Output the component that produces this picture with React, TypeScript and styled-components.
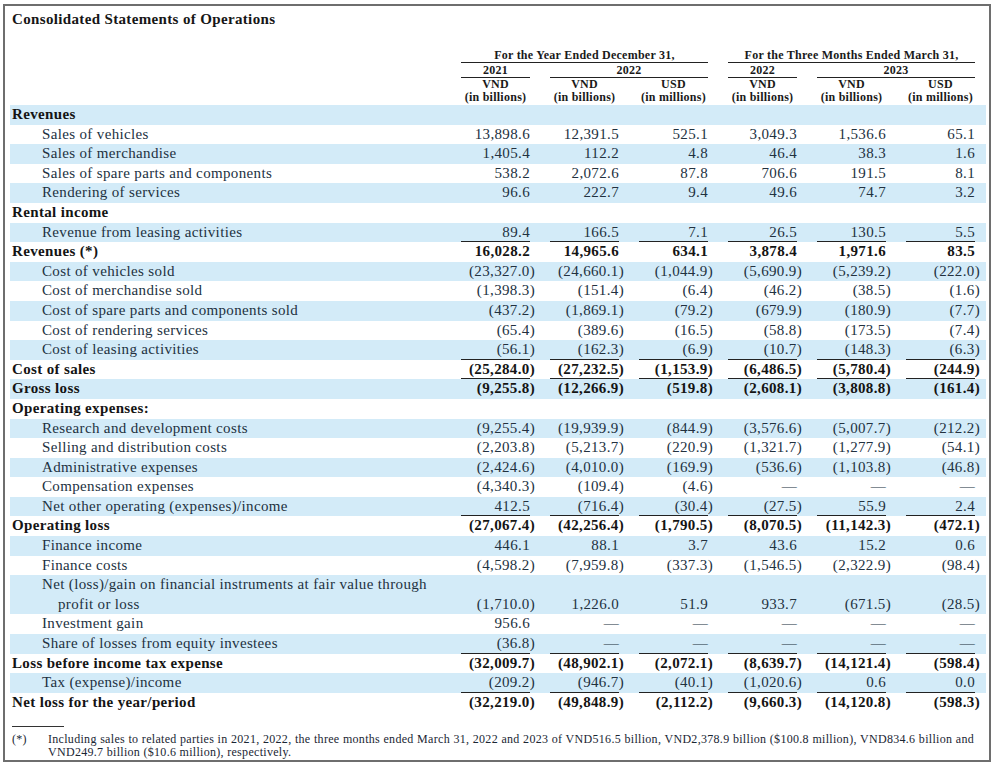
import React from "react";
import styled, { createGlobalStyle } from "styled-components";

const GlobalStyle = createGlobalStyle`
  html, body {
    margin: 0;
    padding: 0;
    background: #ffffff;
  }
`;

const COLS = "1fr repeat(6, 69px)";

const Frame = styled.div`
  box-sizing: border-box;
  margin: 4px 0 0 3px;
  width: 988px;
  height: 758px;
  border: 2px solid #6e6e6e;
  padding: 4px 3px 0 5px;
  font-family: "Liberation Serif", "Times New Roman", serif;
  color: #22313f;
`;

const Title = styled.h1`
  margin: 0;
  padding-left: 2px;
  font-size: 15px;
  line-height: 18px;
  font-weight: bold;
  letter-spacing: 0.35px;
  color: #161616;
`;

const Header = styled.div`
  margin-top: 20px;
  margin-bottom: 1px;
`;

const HeadRow = styled.div<{ $pad?: boolean }>`
  display: grid;
  grid-template-columns: ${COLS};
  column-gap: 20px;
  padding-right: 11px;
  padding-bottom: ${(p) => (p.$pad ? "1px" : "0")};
  padding-top: ${(p) => (p.$pad ? "1px" : "0")};
`;

const HeadCell = styled.div<{ $col: string; $rule?: boolean }>`
  grid-column: ${(p) => p.$col};
  text-align: center;
  font-size: 12px;
  line-height: 13px;
  font-weight: bold;
  letter-spacing: 0.25px;
  color: #1a1a1a;
  white-space: nowrap;
  border-bottom: ${(p) => (p.$rule ? "1px solid #222" : "none")};
`;

const Row = styled.div<{ $band: boolean; $tall?: boolean }>`
  display: grid;
  grid-template-columns: ${COLS};
  column-gap: 20px;
  padding-right: 11px;
  height: ${(p) => (p.$tall ? "39.2px" : "19.6px")};
  align-items: end;
  background: ${(p) => (p.$band ? "#d3ebf8" : "transparent")};
  font-size: 15px;
  line-height: 19.6px;
  letter-spacing: 0.35px;
`;

const Label = styled.div<{ $kind: "head" | "item" | "total" }>`
  padding-left: ${(p) => (p.$kind === "item" ? "32px" : "2px")};
  font-weight: ${(p) => (p.$kind === "item" ? "normal" : "bold")};
  color: ${(p) => (p.$kind === "item" ? "#22313f" : "#141414")};
  white-space: nowrap;
`;

const Wrapped = styled.span`
  display: block;
  padding-left: 16px;
`;

const Num = styled.div<{ $bold: boolean; $rule?: boolean }>`
  text-align: right;
  white-space: nowrap;
  font-weight: ${(p) => (p.$bold ? "bold" : "normal")};
  color: ${(p) => (p.$bold ? "#141414" : "#22313f")};
  box-shadow: ${(p) => (p.$rule ? "inset 0 -1px 0 #222" : "none")};
`;

const Hang = styled.span`
  margin-right: -5px;
`;

const Footnote = styled.div`
  margin-top: 14px;
  font-size: 12px;
  line-height: 13px;
  letter-spacing: 0.3px;
  color: #1a2633;
`;

const FootRule = styled.div`
  width: 52px;
  margin-left: 2px;
  border-top: 1px solid #333;
  margin-bottom: 6px;
`;

const FootBody = styled.div`
  display: grid;
  grid-template-columns: 36px 1fr;
  padding-left: 2px;
  padding-right: 12px;
`;

const FootLine = styled.span<{ $full?: boolean }>`
  display: block;
  text-align: ${(p) => (p.$full ? "justify" : "left")};
  text-align-last: ${(p) => (p.$full ? "justify" : "left")};
  white-space: nowrap;
`;

type Kind = "head" | "item" | "total";

type Line = {
  label: string;
  more?: string;
  kind: Kind;
  values?: string[];
  rule?: boolean;
};

const lines: Line[] = [
  { label: "Revenues", kind: "head" },
  { label: "Sales of vehicles", kind: "item", values: ["13,898.6", "12,391.5", "525.1", "3,049.3", "1,536.6", "65.1"] },
  { label: "Sales of merchandise", kind: "item", values: ["1,405.4", "112.2", "4.8", "46.4", "38.3", "1.6"] },
  { label: "Sales of spare parts and components", kind: "item", values: ["538.2", "2,072.6", "87.8", "706.6", "191.5", "8.1"] },
  { label: "Rendering of services", kind: "item", values: ["96.6", "222.7", "9.4", "49.6", "74.7", "3.2"] },
  { label: "Rental income", kind: "head" },
  { label: "Revenue from leasing activities", kind: "item", rule: true, values: ["89.4", "166.5", "7.1", "26.5", "130.5", "5.5"] },
  { label: "Revenues (*)", kind: "total", values: ["16,028.2", "14,965.6", "634.1", "3,878.4", "1,971.6", "83.5"] },
  { label: "Cost of vehicles sold", kind: "item", values: ["(23,327.0)", "(24,660.1)", "(1,044.9)", "(5,690.9)", "(5,239.2)", "(222.0)"] },
  { label: "Cost of merchandise sold", kind: "item", values: ["(1,398.3)", "(151.4)", "(6.4)", "(46.2)", "(38.5)", "(1.6)"] },
  { label: "Cost of spare parts and components sold", kind: "item", values: ["(437.2)", "(1,869.1)", "(79.2)", "(679.9)", "(180.9)", "(7.7)"] },
  { label: "Cost of rendering services", kind: "item", values: ["(65.4)", "(389.6)", "(16.5)", "(58.8)", "(173.5)", "(7.4)"] },
  { label: "Cost of leasing activities", kind: "item", rule: true, values: ["(56.1)", "(162.3)", "(6.9)", "(10.7)", "(148.3)", "(6.3)"] },
  { label: "Cost of sales", kind: "total", rule: true, values: ["(25,284.0)", "(27,232.5)", "(1,153.9)", "(6,486.5)", "(5,780.4)", "(244.9)"] },
  { label: "Gross loss", kind: "total", values: ["(9,255.8)", "(12,266.9)", "(519.8)", "(2,608.1)", "(3,808.8)", "(161.4)"] },
  { label: "Operating expenses:", kind: "head" },
  { label: "Research and development costs", kind: "item", values: ["(9,255.4)", "(19,939.9)", "(844.9)", "(3,576.6)", "(5,007.7)", "(212.2)"] },
  { label: "Selling and distribution costs", kind: "item", values: ["(2,203.8)", "(5,213.7)", "(220.9)", "(1,321.7)", "(1,277.9)", "(54.1)"] },
  { label: "Administrative expenses", kind: "item", values: ["(2,424.6)", "(4,010.0)", "(169.9)", "(536.6)", "(1,103.8)", "(46.8)"] },
  { label: "Compensation expenses", kind: "item", values: ["(4,340.3)", "(109.4)", "(4.6)", "—", "—", "—"] },
  { label: "Net other operating (expenses)/income", kind: "item", rule: true, values: ["412.5", "(716.4)", "(30.4)", "(27.5)", "55.9", "2.4"] },
  { label: "Operating loss", kind: "total", values: ["(27,067.4)", "(42,256.4)", "(1,790.5)", "(8,070.5)", "(11,142.3)", "(472.1)"] },
  { label: "Finance income", kind: "item", values: ["446.1", "88.1", "3.7", "43.6", "15.2", "0.6"] },
  { label: "Finance costs", kind: "item", values: ["(4,598.2)", "(7,959.8)", "(337.3)", "(1,546.5)", "(2,322.9)", "(98.4)"] },
  {
    label: "Net (loss)/gain on financial instruments at fair value through",
    more: "profit or loss",
    kind: "item",
    values: ["(1,710.0)", "1,226.0", "51.9", "933.7", "(671.5)", "(28.5)"],
  },
  { label: "Investment gain", kind: "item", values: ["956.6", "—", "—", "—", "—", "—"] },
  { label: "Share of losses from equity investees", kind: "item", rule: true, values: ["(36.8)", "—", "—", "—", "—", "—"] },
  { label: "Loss before income tax expense", kind: "total", values: ["(32,009.7)", "(48,902.1)", "(2,072.1)", "(8,639.7)", "(14,121.4)", "(598.4)"] },
  { label: "Tax (expense)/income", kind: "item", rule: true, values: ["(209.2)", "(946.7)", "(40.1)", "(1,020.6)", "0.6", "0.0"] },
  { label: "Net loss for the year/period", kind: "total", values: ["(32,219.0)", "(49,848.9)", "(2,112.2)", "(9,660.3)", "(14,120.8)", "(598.3)"] },
];

function Amount({ value }: { value: string }) {
  if (value.endsWith(")")) {
    return (
      <>
        {value.slice(0, -1)}
        <Hang>)</Hang>
      </>
    );
  }
  return <>{value}</>;
}

export default function App() {
  return (
    <>
      <GlobalStyle />
      <Frame>
        <Title>Consolidated Statements of Operations</Title>
        <Header>
          <HeadRow $pad>
            <HeadCell $col="2 / 5" $rule>For the Year Ended December 31,</HeadCell>
            <HeadCell $col="5 / 8" $rule>For the Three Months Ended March 31,</HeadCell>
          </HeadRow>
          <HeadRow>
            <HeadCell $col="2 / 3" $rule>2021</HeadCell>
            <HeadCell $col="3 / 5" $rule>2022</HeadCell>
            <HeadCell $col="5 / 6" $rule>2022</HeadCell>
            <HeadCell $col="6 / 8" $rule>2023</HeadCell>
          </HeadRow>
          <HeadRow>
            <HeadCell $col="2">VND</HeadCell>
            <HeadCell $col="3">VND</HeadCell>
            <HeadCell $col="4">USD</HeadCell>
            <HeadCell $col="5">VND</HeadCell>
            <HeadCell $col="6">VND</HeadCell>
            <HeadCell $col="7">USD</HeadCell>
          </HeadRow>
          <HeadRow>
            <HeadCell $col="2">(in billions)</HeadCell>
            <HeadCell $col="3">(in billions)</HeadCell>
            <HeadCell $col="4">(in millions)</HeadCell>
            <HeadCell $col="5">(in billions)</HeadCell>
            <HeadCell $col="6">(in billions)</HeadCell>
            <HeadCell $col="7">(in millions)</HeadCell>
          </HeadRow>
        </Header>

        {lines.map((line, i) => (
          <Row key={line.label} $band={i % 2 === 0} $tall={!!line.more}>
            <Label $kind={line.kind}>
              {line.label}
              {line.more && <Wrapped>{line.more}</Wrapped>}
            </Label>
            {line.values?.map((v, j) => (
              <Num key={j} $bold={line.kind === "total"} $rule={line.rule}>
                <Amount value={v} />
              </Num>
            ))}
          </Row>
        ))}

        <Footnote>
          <FootRule />
          <FootBody>
            <span>(*)</span>
            <span>
              <FootLine $full>
                Including sales to related parties in 2021, 2022, the three months ended March 31, 2022 and 2023 of
                VND516.5 billion, VND2,378.9 billion ($100.8 million), VND834.6 billion and
              </FootLine>
              <FootLine>VND249.7 billion ($10.6 million), respectively.</FootLine>
            </span>
          </FootBody>
        </Footnote>
      </Frame>
    </>
  );
}
